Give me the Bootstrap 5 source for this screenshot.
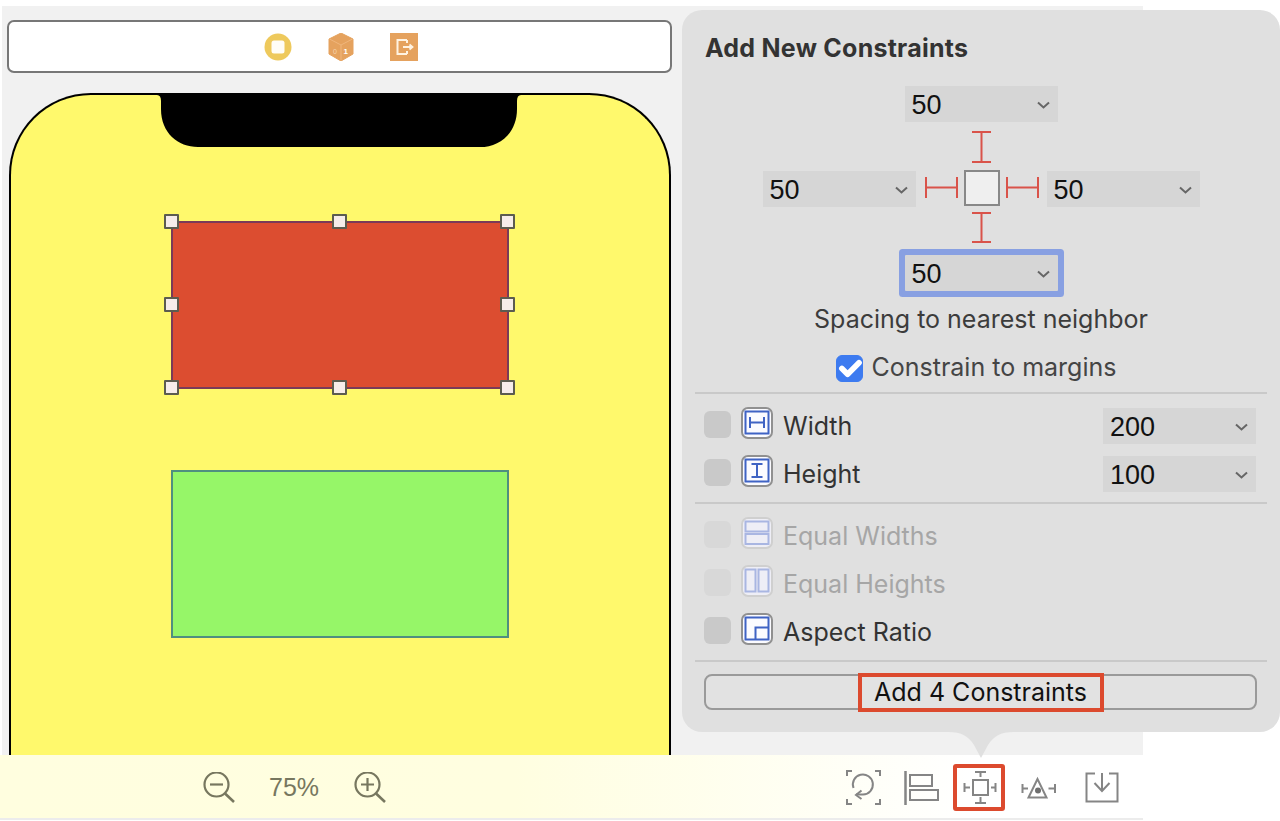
<!DOCTYPE html>
<html lang="en">
<head>
<meta charset="utf-8">
<title>Add New Constraints</title>
<link rel="stylesheet" href="https://cdn.jsdelivr.net/npm/bootstrap@5.3.0/dist/css/bootstrap.min.css">
<style>
html,body{margin:0;height:821px;overflow:hidden;background:#fff}
body{font-family:Inter,"Liberation Sans",sans-serif;color:#333}
.scene{position:relative;width:1280px;height:821px;overflow:hidden;padding-top:6px}
.work{width:1141px;height:749px;margin-left:2px;background:#f1f1f1;padding:14px 0 0 5px;overflow:hidden}
.scenebar{width:665px;height:53px;background:#fff;border:2px solid #777;border-radius:7px;padding-left:255px;gap:36px}
.phone{width:662px;height:720px;margin:20px 0 0 2px;background:#fff96c;border:2px solid #000;border-bottom:0;border-radius:82px 82px 0 0;padding-left:144px}
.notch{display:block;margin-top:-2px}
.block{position:relative;width:338px;height:168px;margin-left:16px;border:2px solid}
.block-red{margin-top:74px;background:#dc4d30;border-color:#7a3a58}
.block-green{margin-top:81px;background:#96f668;border-color:#4f8f80}
.handle{position:absolute;width:15px;height:15px;background:#f6ecea;border:2px solid #5c5c50;border-radius:1px}
.h-l{left:-9px}.h-c{left:159px}.h-r{left:327px}
.h-t{top:-9px}.h-m{top:74px}.h-b{top:157px}
.bottombar{height:65px;width:1143px;padding-top:2px;border-bottom:2px solid #ececec;background:linear-gradient(90deg,#fffedf 0,#fffee0 45%,#fff 85%)}
.zoomout{margin-left:203px}
.pct{margin-left:34px;width:52px;font-size:25px;font-family:"Liberation Sans",sans-serif;color:#77775f;line-height:1}
.zoomin{margin-left:33px}
.tool1{margin-left:460px}
.tool2{margin-left:23px}
.tool3{margin-left:14px;width:52px;height:47px;border:4px solid #dc4a2e;border-radius:3px}
.tool4{margin-left:16px}
.tool5{margin-left:28px}
.pop{position:absolute;left:682px;top:10px;width:598px;height:722px;background:#e0e0e0;border-radius:20px;padding:20px 13px 0}
.arrow{position:absolute;left:266px;top:100%;display:block}
.ptitle{height:36px;line-height:36px;margin:0 0 20px 10px;font-size:25px;font-weight:700;color:#333;letter-spacing:.25px}
.picker{width:153px;height:36px;padding:2px 8px 0 7px;background:#d6d6d6;font-family:"Liberation Sans",sans-serif;font-size:27px;color:#111;line-height:1;flex:none}
.picker-focus{box-shadow:0 0 0 6px #88a0e2;border-radius:1px}
.caption{height:32px;line-height:32px;margin-top:12px;font-size:25px;color:#3c3c3c;text-align:center}
.marginrow{height:32px;margin:17px 10px 0 0;gap:9px;font-size:25px;color:#454545}
.form-check-input.tick{width:27px;height:27px;margin:0;background-color:#3d7bf0;border-color:#3d7bf0;border-radius:6px;background-size:38px}
.rule{height:2px;background:#c9c9c9}
.rule-a{margin-top:8px}
.rule-b{margin-top:10px}
.group{margin-top:13px;padding:0 11px 0 9px;gap:11px}
.crow{height:37px;font-size:25px;color:#333}
.crow-off{color:#a6a6a6}
.cbox{width:27px;height:27px;margin:4px 10px 0 0;background:#c9c9c9;border-radius:6px;flex:none}
.crow-off .cbox{background:#d8d8d8}
.cicon{flex:none;align-self:flex-start;margin-right:10px}
.clabel{line-height:39px;flex:1}
.picker-end{align-self:flex-end}
.addbtn{display:flex;align-items:center;justify-content:center;width:553px;height:36px;margin:12px 0 0 9px;padding:0;background:#e2e2e2;border:2px solid #9a9a9a;border-radius:8px;color:#111}
.addbtn:hover{background:#e2e2e2;border-color:#9a9a9a;color:#111}
.addlabel{flex:none;width:246px;height:39px;line-height:31px;text-align:center;border:4px solid #dc4a2e;font-size:25px}
</style>
</head>
<body>
<div class="scene">
  <div class="work">
    <div class="scenebar d-flex align-items-center">
      <svg width="28" height="28" viewBox="0 0 28 28"><circle cx="14" cy="14" r="13.500" fill="#eec95c"/><rect x="7.500" y="7.500" width="13" height="13" rx="2.500" fill="#fffdf6"/></svg>
      <svg width="26" height="28" viewBox="0 0 26 28"><path d="M13 0 25 6v15L13 28 1 21V6z" fill="#e5a25e" stroke="#e5a25e" stroke-linejoin="round"/><path d="M1.500 6 13 12l11.500-6M13 12v15" stroke="#f0b67c" fill="none"/><text x="15.500" y="21" font-size="8" font-weight="700" fill="#fff" font-family="Liberation Sans">1</text><text x="5" y="21" font-size="7" fill="#f6d5b0" font-family="Liberation Sans">0</text></svg>
      <svg width="28" height="28" viewBox="0 0 28 28"><rect width="28" height="28" fill="#e5a25e"/><path d="M17 7H7.500v14H17M17 7v3M17 21v-3" stroke="#fff3e2" stroke-width="2" fill="none"/><path d="M13 14h9M19.500 11.500 22.500 14l-3 2.500" stroke="#fff3e2" stroke-width="1.800" fill="none"/></svg>
    </div>
    <div class="phone">
      <svg class="notch" width="368" height="54" viewBox="0 0 368 54"><path d="M0 0H368V2H366Q362 2 362 8V16C362 40 345 54 325 54H43C23 54 6 40 6 16V8Q6 2 2 2H0Z" fill="#000"/></svg>
      <div class="block block-red">
        <span class="handle h-l h-t"></span><span class="handle h-c h-t"></span><span class="handle h-r h-t"></span>
        <span class="handle h-l h-m"></span><span class="handle h-r h-m"></span>
        <span class="handle h-l h-b"></span><span class="handle h-c h-b"></span><span class="handle h-r h-b"></span>
      </div>
      <div class="block block-green"></div>
    </div>
  </div>

  <div class="bottombar d-flex align-items-center">
    <svg class="zoomout" width="32" height="31" viewBox="0 0 32 31" fill="none" stroke="#77775f" stroke-width="2.200"><circle cx="13.500" cy="12.500" r="12"/><path d="M22 21.500 31 30" stroke-width="2.600"/><path d="M7 12.500h13"/></svg>
    <span class="pct">75%</span>
    <svg class="zoomin" width="32" height="31" viewBox="0 0 32 31" fill="none" stroke="#77775f" stroke-width="2.200"><circle cx="13.500" cy="12.500" r="12"/><path d="M22 21.500 31 30" stroke-width="2.600"/><path d="M7 12.500h13M13.500 6v13"/></svg>
    <svg class="tool1" width="35" height="35" viewBox="0 0 35 35" fill="none" stroke="#858585" stroke-width="2"><path d="M1 6V1h5M29 1h5v5M1 29v5h5M34 29v5h-5"/><path d="M7.500 18A10 10 0 1 1 17 24.500H10"/><path d="M15.500 20.500 10 25l5.500 4"/></svg>
    <svg class="tool2" width="35" height="34" viewBox="0 0 35 34" fill="none" stroke="#858585" stroke-width="2"><path d="M1.500 0V34" stroke-width="2.500"/><rect x="6" y="4" width="22" height="11"/><rect x="6" y="19" width="28" height="10"/></svg>
    <div class="tool3 d-flex"><svg width="44" height="39" viewBox="0 0 44 39" fill="none" stroke="#858585" stroke-width="2"><rect x="16" y="12" width="15" height="15"/><path d="M18 4h11M23.500 4v5M18 35h11M23.500 29v6M7.500 15v9M7.500 19.500H13M38.500 15v9M34 19.500h4.500"/></svg></div>
    <svg class="tool4" width="36" height="26" viewBox="0 0 36 26" fill="none" stroke="#858585" stroke-width="2"><path d="M16.500 4 7.500 22.500h18z"/><circle cx="17" cy="15.500" r="3" fill="#6e6e6e" stroke="none"/><path d="M1.500 9v9M1.500 13.500H7M34 9v9M27.500 13.500H34"/></svg>
    <svg class="tool5" width="34" height="31" viewBox="0 0 34 31" fill="none" stroke="#858585" stroke-width="2"><path d="M10 1.500H1.500v28h31v-28H24"/><path d="M17 1V19M9.500 11 17 19l7.500-8"/></svg>
  </div>

  <div class="pop">
    <svg class="arrow" width="66" height="28" viewBox="0 0 66 28"><path d="M0 0C14 0 20 4 26 13L33 26 40 13C46 4 52 0 66 0Z" fill="#e0e0e0"/></svg>
    <div class="ptitle">Add New Constraints</div>
    <div class="d-flex flex-column align-items-center">
      <div class="picker d-flex justify-content-between align-items-center"><span>50</span><svg width="13" height="8" viewBox="0 0 13 8" fill="none" stroke="#666" stroke-width="2"><path d="M1 1.500 6.500 6.500 12 1.500"/></svg></div>
      <svg width="21" height="48" viewBox="0 0 21 48" fill="none" stroke="#d9534a" stroke-width="2"><path d="M1 10H20M1 40H20M10.500 10V40"/></svg>
      <div class="d-flex align-items-center">
        <div class="picker d-flex justify-content-between align-items-center"><span>50</span><svg width="13" height="8" viewBox="0 0 13 8" fill="none" stroke="#666" stroke-width="2"><path d="M1 1.500 6.500 6.500 12 1.500"/></svg></div>
        <svg width="131" height="38" viewBox="0 0 131 38" fill="none" stroke="#d9534a" stroke-width="2"><path d="M10 7V28M41 7V28M10 17.500H41M91 7V28M122 7V28M91 17.500H122"/><rect x="49" y="1" width="34" height="34" fill="#efefef" stroke="#888"/></svg>
        <div class="picker d-flex justify-content-between align-items-center"><span>50</span><svg width="13" height="8" viewBox="0 0 13 8" fill="none" stroke="#666" stroke-width="2"><path d="M1 1.500 6.500 6.500 12 1.500"/></svg></div>
      </div>
      <svg width="21" height="47" viewBox="0 0 21 47" fill="none" stroke="#d9534a" stroke-width="2"><path d="M1 5H20M1 34H20M10.500 5V34"/></svg>
      <div class="picker picker-focus d-flex justify-content-between align-items-center"><span>50</span><svg width="13" height="8" viewBox="0 0 13 8" fill="none" stroke="#666" stroke-width="2"><path d="M1 1.500 6.500 6.500 12 1.500"/></svg></div>
    </div>
    <div class="caption">Spacing to nearest neighbor</div>
    <div class="marginrow d-flex justify-content-center align-items-center">
      <input class="form-check-input tick" type="checkbox" checked aria-label="Constrain to margins">
      <span>Constrain to margins</span>
    </div>
    <div class="rule rule-a"></div>
    <div class="group d-flex flex-column">
      <div class="crow d-flex">
        <span class="cbox"></span>
        <svg class="cicon" width="32" height="32" viewBox="0 0 32 32" fill="none"><rect x="1" y="1" width="30" height="30" rx="6" fill="#fbfbff" stroke="#909090" stroke-width="2"/><rect x="4.500" y="4.500" width="23" height="22" stroke="#3f63c4" stroke-width="2"/><path d="M9 10v11M23 10v11M9 15.500h14" stroke="#3f63c4" stroke-width="2"/></svg>
        <span class="clabel">Width</span>
        <div class="picker picker-end d-flex justify-content-between align-items-center"><span>200</span><svg width="13" height="8" viewBox="0 0 13 8" fill="none" stroke="#666" stroke-width="2"><path d="M1 1.500 6.500 6.500 12 1.500"/></svg></div>
      </div>
      <div class="crow d-flex">
        <span class="cbox"></span>
        <svg class="cicon" width="32" height="32" viewBox="0 0 32 32" fill="none"><rect x="1" y="1" width="30" height="30" rx="6" fill="#fbfbff" stroke="#909090" stroke-width="2"/><rect x="4.500" y="4.500" width="23" height="22" stroke="#3f63c4" stroke-width="2"/><path d="M10.500 9h11M10.500 22h11M16 9v13" stroke="#3f63c4" stroke-width="2"/></svg>
        <span class="clabel">Height</span>
        <div class="picker picker-end d-flex justify-content-between align-items-center"><span>100</span><svg width="13" height="8" viewBox="0 0 13 8" fill="none" stroke="#666" stroke-width="2"><path d="M1 1.500 6.500 6.500 12 1.500"/></svg></div>
      </div>
    </div>
    <div class="rule rule-b"></div>
    <div class="group d-flex flex-column">
      <div class="crow crow-off d-flex">
        <span class="cbox"></span>
        <svg class="cicon" width="32" height="32" viewBox="0 0 32 32" fill="none"><rect x="1" y="1" width="30" height="30" rx="6" fill="#eeeef6" stroke="#cfcfcf" stroke-width="2"/><rect x="4.500" y="4.500" width="23" height="10" stroke="#a9b6e2" stroke-width="2"/><rect x="4.500" y="17" width="23" height="10" stroke="#a9b6e2" stroke-width="2"/></svg>
        <span class="clabel">Equal Widths</span>
      </div>
      <div class="crow crow-off d-flex">
        <span class="cbox"></span>
        <svg class="cicon" width="32" height="32" viewBox="0 0 32 32" fill="none"><rect x="1" y="1" width="30" height="30" rx="6" fill="#eeeef6" stroke="#cfcfcf" stroke-width="2"/><rect x="4.500" y="4.500" width="10" height="22" stroke="#a9b6e2" stroke-width="2"/><rect x="17.500" y="4.500" width="10" height="22" stroke="#a9b6e2" stroke-width="2"/></svg>
        <span class="clabel">Equal Heights</span>
      </div>
      <div class="crow d-flex">
        <span class="cbox"></span>
        <svg class="cicon" width="32" height="32" viewBox="0 0 32 32" fill="none"><rect x="1" y="1" width="30" height="30" rx="6" fill="#fbfbff" stroke="#909090" stroke-width="2"/><rect x="4.500" y="4.500" width="23" height="22" stroke="#3f63c4" stroke-width="2"/><path d="M14.500 26.500V14.500H27.500" stroke="#3f63c4" stroke-width="2"/></svg>
        <span class="clabel">Aspect Ratio</span>
      </div>
    </div>
    <div class="rule rule-b"></div>
    <button type="button" class="btn addbtn"><span class="addlabel">Add 4 Constraints</span></button>
  </div>
</div>
<script src="https://cdn.jsdelivr.net/npm/bootstrap@5.3.0/dist/js/bootstrap.bundle.min.js"></script>
</body>
</html>
